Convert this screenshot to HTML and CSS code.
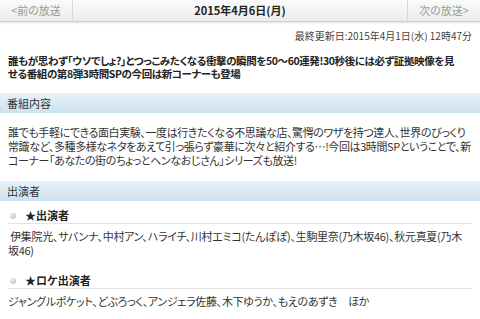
FILE: index.html
```html
<!DOCTYPE html>
<html lang="ja">
<head>
    <meta charset="UTF-8">
    <meta name="viewport" content="width=device-width, initial-scale=1.0">
    <title>番組詳細</title>
    <link rel="stylesheet" href="styles.css">
</head>
<body>
    <div class="nav">
        <a class="nav-link prev" href="#">&lt;前の放送</a>
        <div class="nav-date">2015年4月6日(月)</div>
        <a class="nav-link next" href="#">次の放送&gt;</a>
    </div>

    <p class="updated">最終更新日:2015年4月1日(水) 12時47分</p>

    <p class="lead">誰もが思わず「ウソでしょ?」とつっこみたくなる衝撃の瞬間を50～60連発!30秒後には必ず証拠映像を見<br>せる番組の第8弾3時間SPの今回は新コーナーも登場</p>

    <h2 class="section-title">番組内容</h2>
    <p class="body-text">誰でも手軽にできる面白実験、一度は行きたくなる不思議な店、驚愕のワザを持つ達人、世界のびっくり<br>常識など、多種多様なネタをあえて引っ張らず豪華に次々と紹介する…!今回は3時間SPということで、新<br>コーナー「あなたの街のちょっとヘンなおじさん」シリーズも放送!</p>

    <h2 class="section-title cast-title">出演者</h2>
    <div class="cast">
        <h3 class="cast-head">★出演者</h3>
        <p class="cast-list">&nbsp;伊集院光、サバンナ、中村アン、ハライチ、川村エミコ(たんぽぽ)、生駒里奈(乃木坂46)、秋元真夏(乃木<br>坂46)</p>
        <h3 class="cast-head">★ロケ出演者</h3>
        <p class="cast-list">ジャングルポケット、どぶろっく、アンジェラ佐藤、木下ゆうか、もえのあずき　ほか</p>
    </div>
</body>
</html>
```
FILE: styles.css
```css
body {
    margin: 0;
    font-family: "Noto Sans CJK JP", "Liberation Sans", sans-serif;
    font-size: 11px;
    color: #333;
    background: #fff;
    font-feature-settings: "palt";
}
p, h2, h3 {
    margin: 0;
}
.nav {
    display: flex;
    height: 21px;
    background: linear-gradient(#fbfbfb, #ececec);
    border-bottom: 1px solid #cfcfcf;
    box-shadow: 0 1px 2px rgba(0,0,0,0.12);
}
.nav-link {
    width: 72px;
    line-height: 21px;
    text-align: center;
    color: #999;
    text-decoration: none;
}
.prev {
    border-right: 1px solid #d8d8d8;
}
.next {
    border-left: 1px solid #d8d8d8;
}
.nav-date {
    flex: 1;
    text-align: center;
    line-height: 21px;
    font-weight: bold;
    color: #222;
}
.updated {
    margin-top: 6px;
    padding-right: 8px;
    text-align: right;
    font-size: 10px;
    color: #444;
}
.lead {
    margin-top: 11px;
    padding: 0 8px;
    font-size: 10.5px;
    font-weight: bold;
    line-height: 13px;
    letter-spacing: -0.4px;
    white-space: nowrap;
    color: #222;
}
.section-title {
    margin-top: 13px;
    height: 20px;
    padding-left: 7px;
    font-size: 11px;
    font-weight: normal;
    line-height: 20px;
    color: #333;
    background: linear-gradient(#e6f1f8, #cde2ef);
}
.body-text {
    margin-top: 12px;
    padding: 0 8px;
    line-height: 14px;
    letter-spacing: -0.4px;
    white-space: nowrap;
}
.cast-title {
    margin-top: 14px;
}
.cast {
    padding: 0 8px;
}
.cast-head {
    display: flex;
    align-items: center;
    margin-top: 8px;
    padding: 0 0 1px 2px;
    font-size: 11px;
    font-weight: bold;
    line-height: 13px;
    color: #222;
    border-bottom: 1px solid #e4e4e4;
}
.cast-head::before {
    content: "";
    width: 6px;
    height: 6px;
    margin-right: 9px;
    border-radius: 50%;
    background: radial-gradient(circle at 35% 35%, #e8eef5, #a9bccd);
}
.cast-list {
    margin-top: 5px;
    line-height: 14px;
    letter-spacing: -0.3px;
    white-space: nowrap;
}
.cast-list + .cast-head {
    margin-top: 17px;
}
```
